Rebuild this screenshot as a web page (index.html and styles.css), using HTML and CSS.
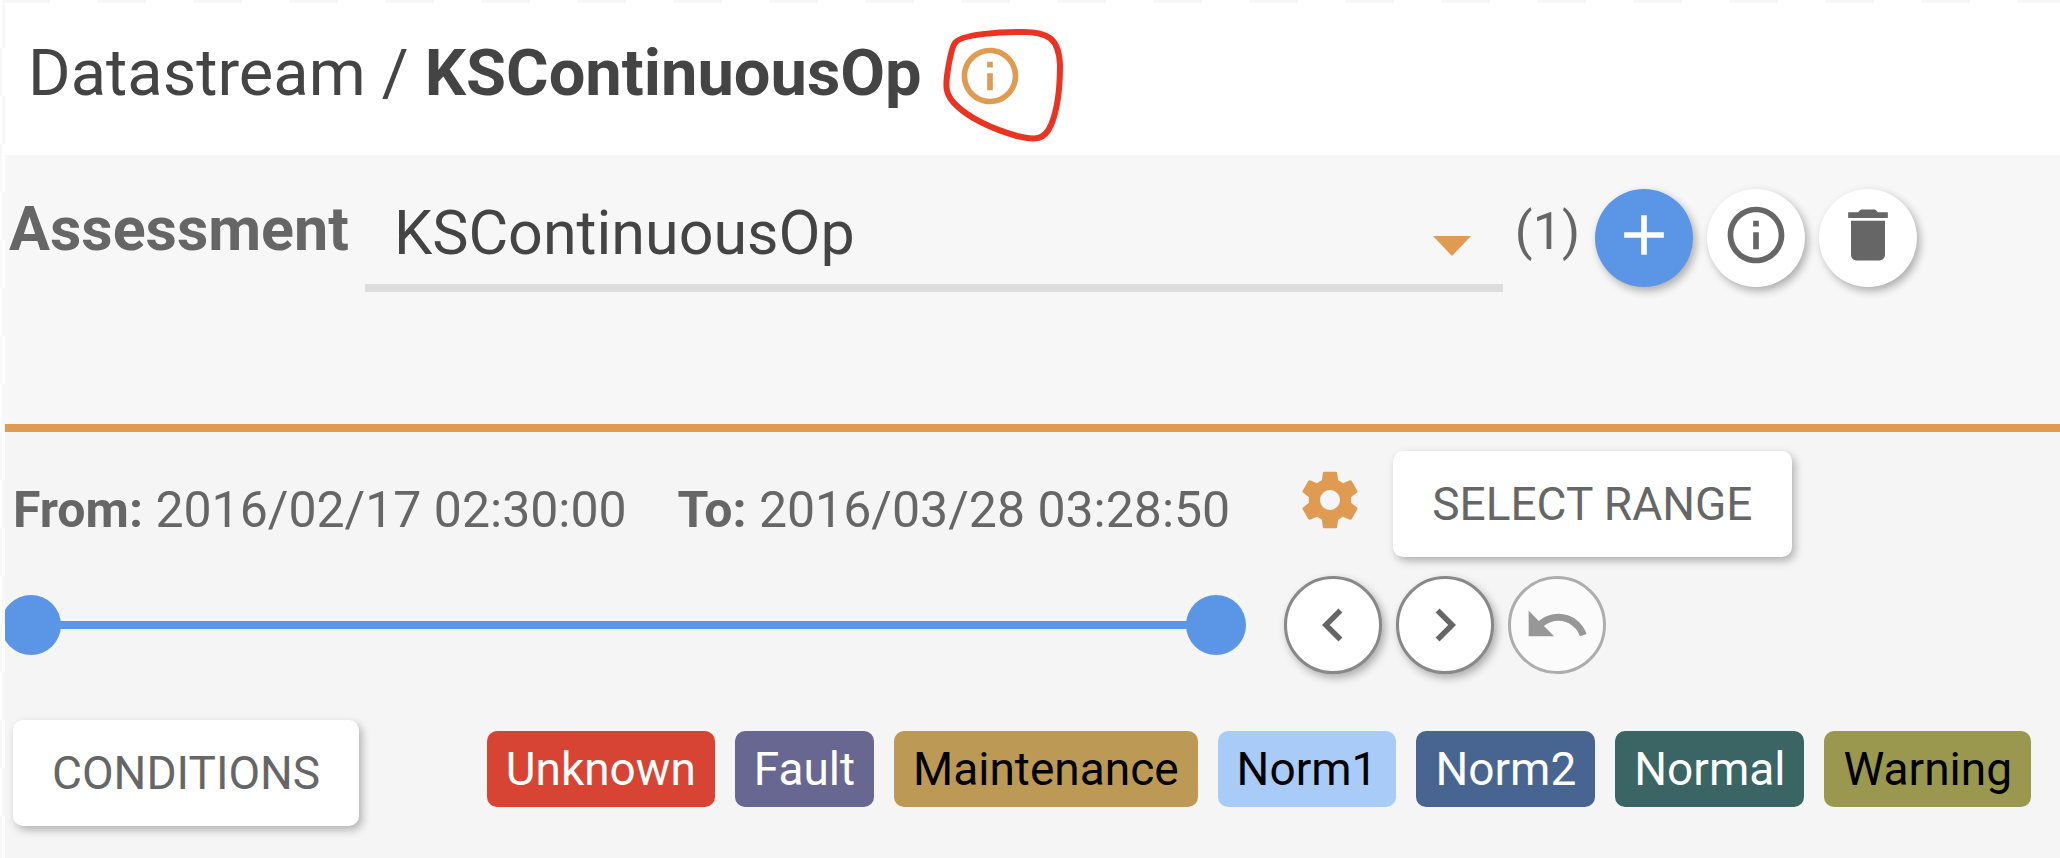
FILE: index.html
```html
<!DOCTYPE html>
<html lang="en">
<head>
<meta charset="utf-8">
<meta name="viewport" content="width=device-width, initial-scale=1">
<title>Datastream / KSContinuousOp</title>
<link rel="stylesheet" href="styles.css">
</head>
<body>
<svg class="defs" aria-hidden="true">
  <symbol id="info" viewBox="0 0 24 24"><path d="M11 17h2v-6h-2v6zm1-15C6.48 2 2 6.48 2 12s4.480 10 10 10 10-4.480 10-10S17.520 2 12 2zm0 18c-4.410 0-8-3.590-8-8s3.590-8 8-8 8 3.590 8 8-3.590 8-8 8zM11 9h2V7h-2v2z"/></symbol>
</svg>
<div class="page">
  <header class="header">
    <h1 class="title">Datastream / <strong>KSContinuousOp</strong></h1>
    <button class="icon-button marked" type="button" aria-label="Datastream information">
      <svg class="icon"><use href="#info"/></svg>
      <svg class="scribble" viewBox="0 0 124 118" aria-hidden="true"><path d="M14 16C20 7 60 5 78 5C108 4 118 12 119 38C119 60 116 84 110 98C104 112 96 114 76 109C52 102 30 92 16 79C4 68 4 60 7 42C9 30 11 20 14 16Z"/></svg>
    </button>
  </header>

  <section class="assessment">
    <label class="assessment-label" for="assessment">Assessment</label>
    <div class="select-field">
      <select id="assessment"><option>KSContinuousOp</option></select>
      <svg class="caret" viewBox="0 0 38 20" aria-hidden="true"><path d="M0 0h38L19 20z"/></svg>
    </div>
    <span class="count">(1)</span>
    <div class="actions">
      <button class="round primary" type="button" aria-label="Add assessment"><svg class="icon" viewBox="0 0 24 24"><path d="M19 13h-6v6h-2v-6H5v-2h6V5h2v6h6v2z"/></svg></button>
      <button class="round" type="button" aria-label="Assessment information"><svg class="icon"><use href="#info"/></svg></button>
      <button class="round" type="button" aria-label="Delete assessment"><svg class="icon" viewBox="0 0 24 24"><path d="M6 19c0 1.100.9 2 2 2h8c1.100 0 2-.9 2-2V7H6v12zM19 4h-3.500l-1-1h-5l-1 1H5v2h14V4z"/></svg></button>
    </div>
  </section>

  <section class="range">
    <div class="dates">
      <span><strong>From:</strong> 2016/02/17 02:30:00</span>
      <span><strong>To:</strong> 2016/03/28 03:28:50</span>
    </div>
    <div class="range-tools">
      <button class="icon-button" type="button" aria-label="Range settings"><svg class="icon" viewBox="0 0 24 24"><path d="M19.430 12.980c.04-.32.070-.64.070-.98s-.03-.66-.07-.98l2.110-1.650c.19-.15.240-.42.120-.64l-2-3.460c-.12-.22-.39-.3-.61-.22l-2.490 1c-.52-.4-1.080-.73-1.690-.98l-.38-2.650C14.460 2.180 14.250 2 14 2h-4c-.25 0-.46.180-.49.420l-.38 2.650c-.61.250-1.170.590-1.690.980l-2.490-1c-.23-.09-.49 0-.61.220l-2 3.460c-.13.220-.07.490.120.640l2.110 1.650c-.04.320-.07.650-.07.980s.03.660.07.980l-2.110 1.650c-.19.150-.24.420-.12.640l2 3.460c.12.220.39.300.61.220l2.490-1c.52.400 1.080.730 1.690.980l.38 2.650c.03.240.24.420.49.420h4c.25 0 .46-.18.490-.42l.38-2.650c.61-.25 1.170-.59 1.690-.98l2.490 1c.23.090.49 0 .61-.22l2-3.460c.12-.22.070-.49-.12-.64l-2.110-1.650zM12 15.500c-1.930 0-3.500-1.570-3.500-3.500s1.570-3.500 3.500-3.500 3.500 1.570 3.500 3.500-1.570 3.500-3.500 3.500z"/></svg></button>
      <button class="raised" type="button">SELECT RANGE</button>
    </div>
    <div class="slider">
      <input type="range" min="0" max="100" value="0" aria-label="Range start">
      <input type="range" min="0" max="100" value="100" aria-label="Range end">
    </div>
    <div class="steps">
      <button class="round outlined" type="button" aria-label="Previous"><svg class="icon small" viewBox="0 0 24 24"><path d="M15.410 7.410L14 6l-6 6 6 6 1.410-1.410L10.830 12z"/></svg></button>
      <button class="round outlined" type="button" aria-label="Next"><svg class="icon small" viewBox="0 0 24 24"><path d="M10 6L8.590 7.410 13.170 12l-4.580 4.590L10 18l6-6z"/></svg></button>
      <button class="round outlined" type="button" aria-label="Undo" disabled><svg class="icon" viewBox="0 0 24 24"><path d="M12.500 8c-2.650 0-5.050.99-6.900 2.600L2 7v9h9l-3.620-3.620c1.390-1.160 3.160-1.880 5.120-1.880 3.540 0 6.550 2.310 7.600 5.500l2.370-.78C21.080 11.030 17.150 8 12.500 8z"/></svg></button>
    </div>
  </section>

  <section class="conditions">
    <button class="raised" type="button">CONDITIONS</button>
    <ul class="chips">
      <li class="chip unknown">Unknown</li>
      <li class="chip fault">Fault</li>
      <li class="chip maintenance">Maintenance</li>
      <li class="chip norm1">Norm1</li>
      <li class="chip norm2">Norm2</li>
      <li class="chip normal">Normal</li>
      <li class="chip warning">Warning</li>
    </ul>
  </section>
</div>
</body>
</html>
```

FILE: styles.css
```css
* { box-sizing: border-box; }

body {
  margin: 0;
  padding: 3px 0 0 5px;
  min-height: 100vh;
  display: flex;
  font-family: Roboto, "Liberation Sans", sans-serif;
  color: #666;
  background: conic-gradient(#fff 25%, #f7f7f7 0 50%, #fff 0 75%, #f7f7f7 0) 2px 0 / 96px 96px;
}

button, select { font: inherit; color: inherit; }
button { border: 0; padding: 0; cursor: pointer; }

.defs { position: absolute; width: 0; height: 0; }

.page {
  flex: 1;
  min-width: 0;
  overflow: hidden;
  background: #f5f5f5;
}

.icon { display: block; width: 68px; height: 68px; fill: currentColor; }
.icon.small { width: 66px; height: 66px; }

.icon-button { background: none; color: #e09b52; }

/* Header */
.header {
  display: flex;
  align-items: flex-end;
  gap: 34px;
  padding: 33px 28px 45px 23px;
  background: #fff;
}

.title {
  margin: 0;
  font-size: 65px;
  line-height: 74px;
  font-weight: 400;
  color: #444;
}

.marked { position: relative; }

.scribble {
  position: absolute;
  left: -15px;
  top: -15px;
  width: 124px;
  height: 118px;
  fill: none;
  stroke: #ea3323;
  stroke-width: 6;
}

/* Assessment picker */
.assessment {
  display: flex;
  align-items: flex-start;
  padding: 34px 143px 132px 4px;
  border-bottom: 8px solid #e09b52;
  background: #f7f7f7;
}

.assessment-label {
  margin-right: 16px;
  font-size: 61px;
  line-height: 80px;
  font-weight: 700;
}

.select-field {
  flex: 1;
  display: grid;
  align-items: center;
  border-bottom: 8px solid #ddd;
}

.select-field > * { grid-area: 1 / 1; }

.select-field select {
  appearance: none;
  width: 100%;
  height: 95px;
  padding: 0 80px 8px 29px;
  border: 0;
  background: none;
  font-size: 61px;
  color: #444;
}

.caret {
  justify-self: end;
  width: 38px;
  height: 20px;
  margin: 18px 32px 0 0;
  fill: #e09b52;
  pointer-events: none;
}

.count {
  margin: 0 15px 0 12px;
  font-size: 52px;
  line-height: 86px;
}

.actions { display: flex; gap: 14px; }

.round {
  display: grid;
  place-items: center;
  width: 98px;
  height: 98px;
  padding-bottom: 6px;
  border-radius: 50%;
  background: #fff;
  box-shadow: 3px 4px 8px rgba(0, 0, 0, .3);
}

.round.primary { background: #5b96e6; color: #fff; }

.round.outlined { padding: 0; border: 3px solid #888; }

.round:disabled { opacity: .65; box-shadow: none; }

.raised {
  height: 106px;
  padding: 0 39px;
  border-radius: 10px;
  background: #fff;
  font-size: 46px;
  white-space: nowrap;
  box-shadow: 3px 4px 8px rgba(0, 0, 0, .28);
}

/* Time range */
.range {
  display: grid;
  grid-template-columns: 8fr 5fr;
  column-gap: 38px;
  row-gap: 19px;
  align-items: center;
  padding-top: 19px;
}

.dates {
  display: flex;
  justify-content: space-between;
  padding: 12px 16px 0 8px;
  font-size: 50px;
  line-height: 60px;
  white-space: nowrap;
}

.range-tools { display: flex; align-items: center; gap: 29px; }
.range-tools .icon-button { padding: 0 0 8px 12px; }

.slider { display: grid; margin-left: -4px; }

.slider input {
  grid-area: 1 / 1;
  appearance: none;
  width: 100%;
  height: 60px;
  margin: 0;
  background: linear-gradient(#5b96e6, #5b96e6) center / calc(100% - 60px) 8px no-repeat;
  pointer-events: none;
}

.slider input::-webkit-slider-thumb {
  appearance: none;
  width: 60px;
  height: 60px;
  border: 0;
  border-radius: 50%;
  background: #5b96e6;
  pointer-events: auto;
}

.steps { display: flex; gap: 14px; }

/* Condition legend */
.conditions {
  display: flex;
  justify-content: space-between;
  padding: 46px 29px 32px 8px;
}

.chips {
  display: flex;
  gap: 20px;
  margin: 11px 0 0;
  padding: 0;
  list-style: none;
}

.chip {
  height: 76px;
  padding: 0 19px;
  border-radius: 10px;
  font-size: 46px;
  line-height: 76px;
  color: #fff;
}

.unknown { background: #d84434; }
.fault { background: #676792; }
.maintenance { background: #bc9a55; color: #000; }
.norm1 { background: #a9cbf7; color: #000; }
.norm2 { background: #486591; }
.normal { background: #3b6464; }
.warning { background: #9a974f; color: #000; }
```
